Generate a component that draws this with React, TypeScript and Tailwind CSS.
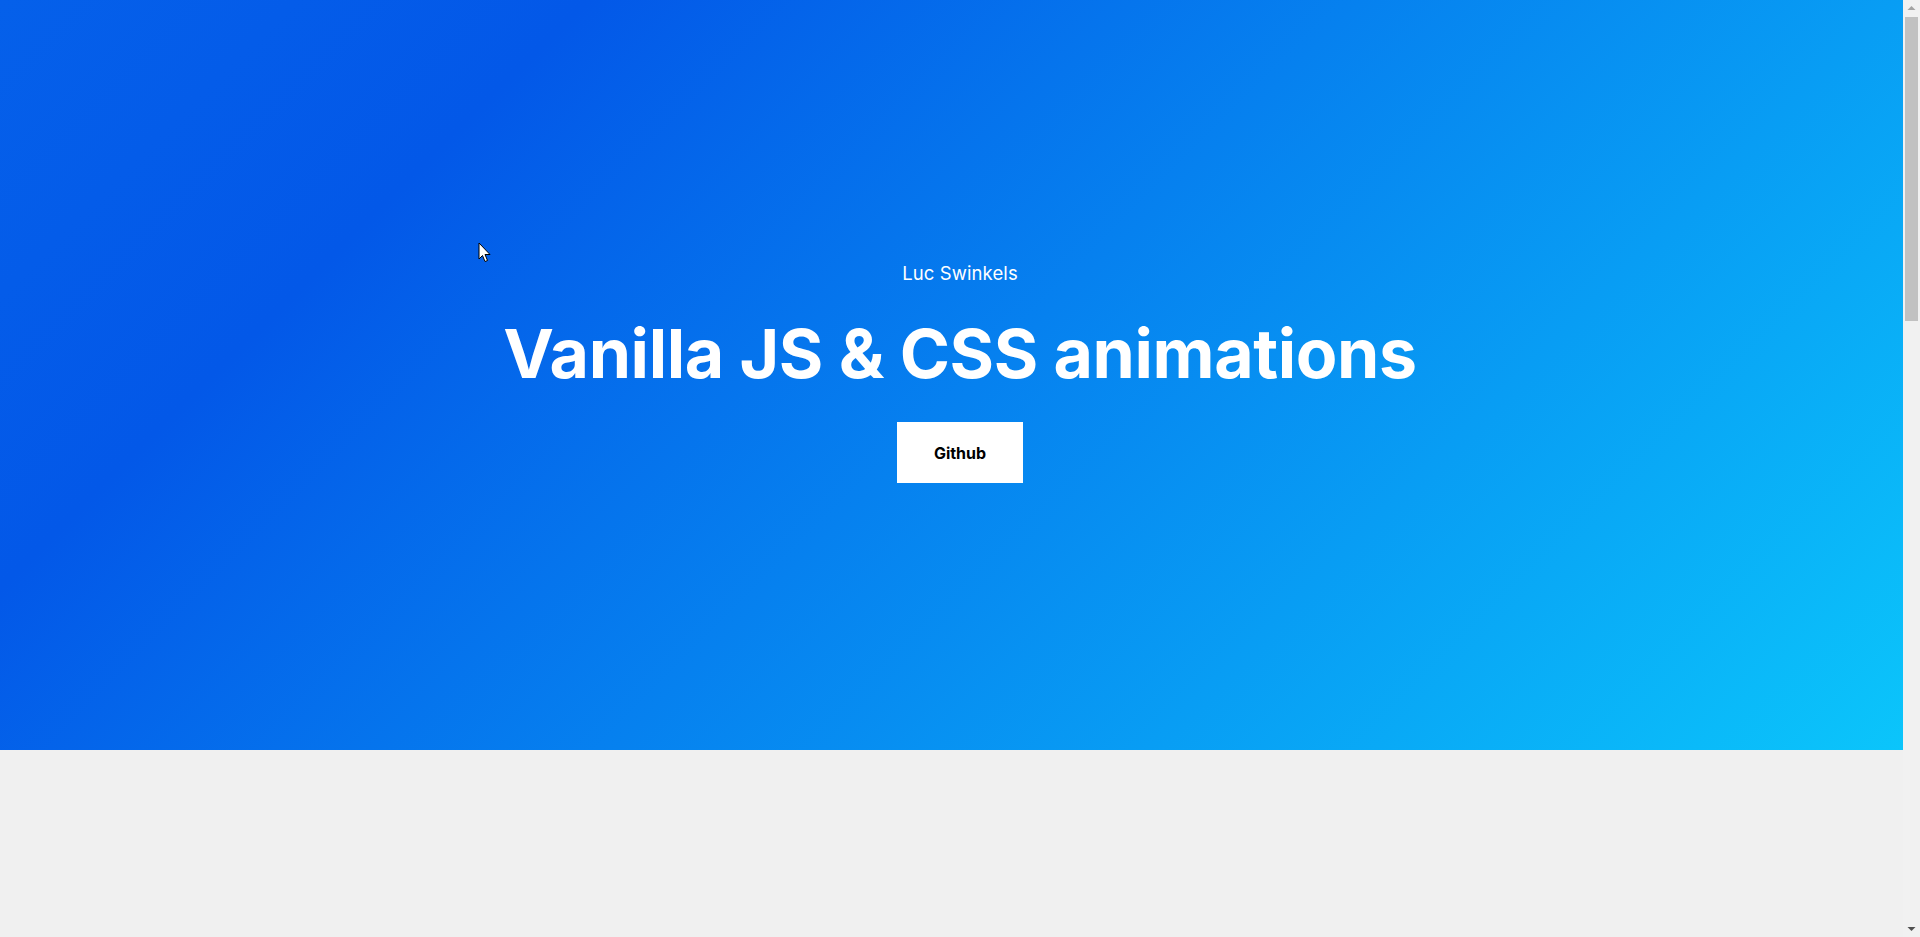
import React from "react";

export default function App() {
  return (
    <div className="overflow-x-hidden bg-[#f0f0f0] min-h-[2780px]" style={{ fontFamily: "Inter, 'Noto Sans', sans-serif" }}>
      <section className="relative w-screen h-[80vh] pb-[3px] flex flex-col items-center justify-center text-white bg-[linear-gradient(135deg,#0560ea_0%,#0358e8_22%,#0bc6fb_100%)]">
        <p className="text-[18.5px] leading-none font-normal tracking-[0.1px]">Luc Swinkels</p>
        <h1 className="mt-[37px] text-[68px] leading-none font-bold tracking-[-0.4px]">Vanilla JS &amp; CSS animations</h1>
        <a className="mt-[35px] w-[126px] h-[61px] bg-white text-black text-[16px] font-bold flex items-center justify-center">Github</a>
        <svg className="absolute left-[478px] top-[242px]" width="13" height="21" viewBox="0 0 13 21">
          <path d="M1 1 L1 17 L4.5 13.5 L7 19.5 L9.5 18.5 L7 12.5 L12 12.5 Z" fill="#fff" stroke="#000" strokeWidth="1" strokeLinejoin="miter" />
        </svg>
      </section>
      <div className="fixed right-0 top-0 w-[17px] h-screen bg-[#f1f1f1] flex flex-col items-center">
        <svg className="mt-[5px]" width="9" height="6" viewBox="0 0 9 6">
          <path d="M0.5 5 L4.5 1 L8.5 5 Z" fill="#a3a3a3" />
        </svg>
        <div className="mt-[6px] w-[13px] h-[304px] bg-[#c1c1c1]" />
        <div className="flex-1" />
        <svg className="mb-[5px]" width="9" height="6" viewBox="0 0 9 6">
          <path d="M0.5 1 L4.5 5 L8.5 1 Z" fill="#505050" />
        </svg>
      </div>
    </div>
  );
}
